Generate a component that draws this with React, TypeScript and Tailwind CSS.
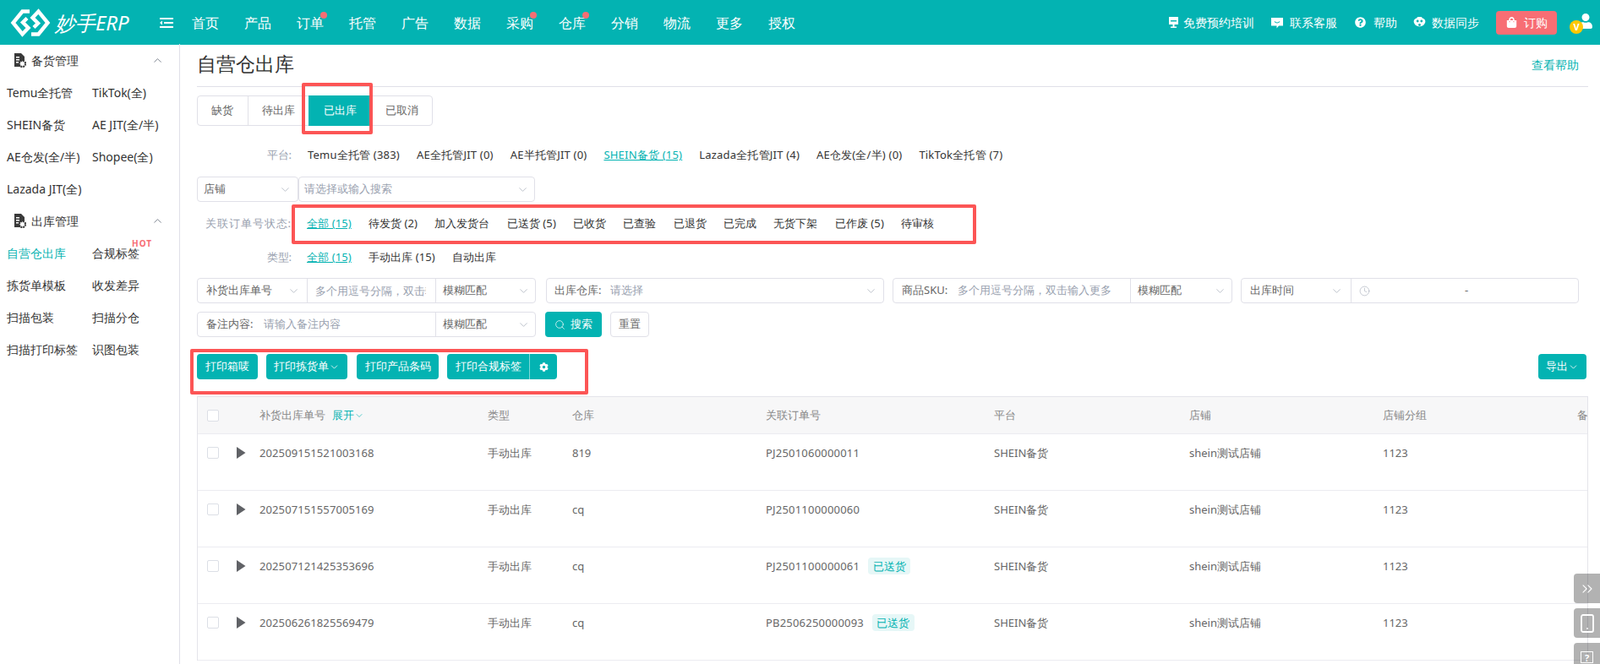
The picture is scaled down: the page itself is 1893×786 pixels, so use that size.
import { ChevronDown, ChevronUp, ChevronsRight, Clock, Search, Smartphone } from 'lucide-react';
import { FaCog, FaQuestionCircle, FaShoppingBag, FaUser } from 'react-icons/fa';

const navItems = [
  { label: '首页' },
  { label: '产品' },
  { label: '订单', dot: true },
  { label: '托管' },
  { label: '广告' },
  { label: '数据' },
  { label: '采购', dot: true },
  { label: '仓库', dot: true },
  { label: '分销' },
  { label: '物流' },
  { label: '更多' },
  { label: '授权' },
];

const platforms = ['Temu全托管 (383)', 'AE全托管JIT (0)', 'AE半托管JIT (0)', 'SHEIN备货 (15)', 'Lazada全托管JIT (4)', 'AE仓发(全/半) (0)', 'TikTok全托管 (7)'];
const statuses = ['全部 (15)', '待发货 (2)', '加入发货台', '已送货 (5)', '已收货', '已查验', '已退货', '已完成', '无货下架', '已作废 (5)', '待审核'];

const rows = [
  { no: '202509151521003168', wh: '819', order: 'PJ2501060000011', tag: false },
  { no: '202507151557005169', wh: 'cq', order: 'PJ2501100000060', tag: false },
  { no: '202507121425353696', wh: 'cq', order: 'PJ2501100000061', tag: true },
  { no: '202506261825569479', wh: 'cq', order: 'PB2506250000093', tag: true },
];

const cols = 'grid grid-cols-[73px_270px_100px_229px_270px_231px_229px_230px_200px]';

function DocIcon() {
  return (
    <svg width="15" height="17" viewBox="0 0 15 17" className="shrink-0">
      <path d="M1 0h8l4 4v5H9v7H1z" fill="#3a3a3a" />
      <path d="M3 4h4v1.500H3zM3 7h4v1.500H3zM3 10h3v1.500H3z" fill="#fff" />
      <circle cx="10.500" cy="12.500" r="3.600" fill="#fff" stroke="#3a3a3a" strokeWidth="2.200" strokeDasharray="2 0.8" />
    </svg>
  );
}

function Logo() {
  return (
    <svg width="48" height="36" viewBox="0 0 48 36" fill="none" stroke="#fff" strokeWidth="4.400" className="shrink-0">
      <path d="M23 4.500H14.500L3.500 18l11 13.500 7-7.500-6.500-6.500 5-5" />
      <path d="M25 31.500h8.500L44.500 18l-11-13.500-7 7.500 6.500 6.500-5 5" />
    </svg>
  );
}

function MenuFold() {
  return (
    <svg width="16" height="12" viewBox="0 0 16 12" fill="#fff" className="shrink-0">
      <rect x="0" y="0" width="16" height="2" />
      <rect x="5" y="5" width="11" height="2" />
      <rect x="0" y="10" width="16" height="2" />
      <path d="M0 6l3-2.500v5z" />
    </svg>
  );
}

function BoardIcon() {
  return (
    <svg width="13" height="15" viewBox="0 0 13 15" fill="#fff" className="shrink-0">
      <path d="M1 1h11v9H1z" />
      <rect x="3" y="5" width="7" height="1.500" fill="#03b3b2" />
      <path d="M5.500 10h2v2.500H10V14H3v-1.500h2.500z" />
    </svg>
  );
}

function ChatIcon() {
  return (
    <svg width="14" height="14" viewBox="0 0 14 14" fill="#fff" className="shrink-0">
      <path d="M0 1h14v9.500H9L6.500 13.500V10.500H0z" />
      <path d="M4 5.500c1.500 2 4.500 2 6 0" stroke="#03b3b2" strokeWidth="1.200" fill="none" />
    </svg>
  );
}

function SyncIcon() {
  return (
    <svg width="15" height="14" viewBox="0 0 15 14" className="shrink-0">
      <path d="M4 1.500a4 4 0 0 1 7 0 4 4 0 0 1 3 5.500 7 7 0 0 1-13 0 4 4 0 0 1 3-5.500z" fill="#fff" />
      <circle cx="5.200" cy="5" r="1.400" fill="#03b3b2" />
      <circle cx="9.800" cy="5" r="1.400" fill="#03b3b2" />
      <circle cx="7.500" cy="9.500" r="1.400" fill="#03b3b2" />
    </svg>
  );
}

function Caret({ className = '' }: { className?: string }) {
  return <ChevronDown size={15} strokeWidth={1} className={`shrink-0 text-gray-400 ${className}`} />;
}

function Fuzzy() {
  return (
    <div className="flex flex-1 items-center justify-between pl-[8px] pr-[6px] text-[#666]">
      模糊匹配
      <Caret />
    </div>
  );
}

function SideSection({ title, items }: { title: string; items: { label: string; active?: boolean; hot?: boolean }[] }) {
  return (
    <>
      <div className="flex h-[38px] items-center pl-[16px] pr-[18px] text-[14px] text-[#333]">
        <DocIcon />
        <span className="ml-[6px] flex-1">{title}</span>
        <ChevronUp size={15} strokeWidth={1} className="text-gray-700" />
      </div>
      <div className="grid grid-cols-[101px_1fr] pl-[8px] text-[14px] text-[#333]">
        {items.map((it) => (
          <div key={it.label} className="flex h-[38px] items-center">
            <span className={`relative whitespace-nowrap ${it.active ? 'text-[#03b3b2]' : ''}`}>
              {it.label}
              {it.hot && (
                <span className="absolute left-[47px] top-[-6px] text-[10px] font-bold leading-[10px] tracking-[1px] text-[#f76e74]">HOT</span>
              )}
            </span>
          </div>
        ))}
      </div>
    </>
  );
}

export default function App() {
  return (
    <div className="relative flex h-[786px] w-full flex-col overflow-hidden bg-white font-['Open_Sans','Noto_Sans_CJK_SC',sans-serif] text-[13px] text-[#333]">
      {/* top bar */}
      <header className="flex h-[53px] shrink-0 items-center bg-[#03b3b2] text-white">
        <div className="ml-[12px]">
          <Logo />
        </div>
        <span className="ml-[5px] w-[124px] text-[24px] italic leading-none">妙手ERP</span>
        <MenuFold />
        <nav className="ml-[22px] flex gap-[30px] text-[16px] font-medium">
          {navItems.map((n) => (
            <span key={n.label} className="relative whitespace-nowrap">
              {n.label}
              {n.dot && <span className="absolute right-[-4px] top-[-1px] h-[8px] w-[8px] rounded-full bg-[#f76e74]" />}
            </span>
          ))}
        </nav>
        <div className="ml-auto flex items-center pr-[9px] text-[14px]">
          <BoardIcon />
          <span className="ml-[5px]">免费预约培训</span>
          <span className="ml-[20px]"><ChatIcon /></span>
          <span className="ml-[8px]">联系客服</span>
          <FaQuestionCircle size={13} className="ml-[21px]" />
          <span className="ml-[9px]">帮助</span>
          <span className="ml-[19px]"><SyncIcon /></span>
          <span className="ml-[7px]">数据同步</span>
          <div className="ml-[20px] flex h-[28px] w-[72px] items-center justify-center gap-[8px] rounded-[4px] bg-[#f76e74]">
            <FaShoppingBag size={13} />
            订购
          </div>
          <div className="relative ml-[25px] h-[28px] w-[17px]">
            <FaUser size={18} className="absolute left-0 top-[3px]" />
            <span className="absolute left-[-10px] top-[11px] flex h-[16px] w-[16px] items-center justify-center rounded-full bg-[#ffc800] text-[11px] font-bold leading-none">V</span>
          </div>
        </div>
      </header>

      <div className="flex min-h-0 flex-1">
        {/* left menu */}
        <aside className="-mt-px w-[213px] shrink-0 border-r border-[#e0e0e8]">
          <SideSection
            title="备货管理"
            items={[
              { label: 'Temu全托管' },
              { label: 'TikTok(全)' },
              { label: 'SHEIN备货' },
              { label: 'AE JIT(全/半)' },
              { label: 'AE仓发(全/半)' },
              { label: 'Shopee(全)' },
              { label: 'Lazada JIT(全)' },
            ]}
          />
          <SideSection
            title="出库管理"
            items={[
              { label: '自营仓出库', active: true },
              { label: '合规标签', hot: true },
              { label: '拣货单模板' },
              { label: '收发差异' },
              { label: '扫描包装' },
              { label: '扫描分仓' },
              { label: '扫描打印标签' },
              { label: '识图包装' },
            ]}
          />
        </aside>

        <main className="min-w-0 flex-1 pl-[20px] pr-[14px]">
          <div className="flex h-[50px] items-center justify-between border-b border-[#e0e0e8] pb-[3px] pr-[11px]">
            <h1 className="mb-[2px] text-[23px] leading-none text-[#333]">自营仓出库</h1>
            <a className="text-[14px] text-[#03b3b2]">查看帮助</a>
          </div>

          {/* tabs */}
          <div className="relative mt-[10px] flex h-[36px] w-[279px] rounded-[4px] border border-[#e0e0e8] text-[#666]">
            <div className="flex w-[60px] items-center justify-center border-r border-[#e0e0e8]">缺货</div>
            <div className="flex w-[72px] items-center justify-center">待出库</div>
            <div className="my-[-1px] flex w-[75px] items-center justify-center bg-[#03b3b2] text-white">已出库</div>
            <div className="flex w-[72px] items-center justify-center">已取消</div>
            <div className="absolute left-[123px] top-[-16px] h-[61px] w-[84px] rounded-[2px] border-4 border-[#fc5555]" />
          </div>

          <div className="mt-[22px] flex h-[26px] items-center">
            <span className="w-[112px] shrink-0 text-right text-gray-400">平台:</span>
            <div className="ml-[19px] flex gap-[20px] whitespace-nowrap tracking-[0.2px]">
              {platforms.map((p, i) => (
                <span key={p} className={i === 3 ? 'text-[#03b3b2] underline' : ''}>{p}</span>
              ))}
            </div>
          </div>

          <div className="mt-[12px] flex h-[30px]">
            <div className="flex w-[120px] items-center justify-between rounded-[4px] border border-[#e0e0e8] pl-[7px] pr-[7px] text-[#666]">
              店铺
              <Caret />
            </div>
            <div className="flex w-[280px] items-center justify-between rounded-[4px] border border-[#e0e0e8] pl-[6px] pr-[6px] text-gray-400">
              请选择或输入搜索
              <Caret />
            </div>
          </div>

          <div className="relative mt-[12px] flex h-[26px] items-center pt-[2px]">
            <span className="w-[112px] shrink-0 text-right tracking-[1px] text-gray-400">关联订单号状态:</span>
            <div className="ml-[18px] flex gap-[20px] whitespace-nowrap tracking-[0.1px]">
              {statuses.map((s, i) => (
                <span key={s} className={i === 0 ? 'text-[#03b3b2] underline' : ''}>{s}</span>
              ))}
            </div>
            <div className="absolute left-[112px] top-[-9px] h-[47px] w-[810px] rounded-[2px] border-4 border-[#fc5555]" />
          </div>

          <div className="mt-[14px] flex h-[26px] items-center pt-[2px]">
            <span className="w-[112px] shrink-0 text-right text-gray-400">类型:</span>
            <div className="ml-[18px] flex gap-[20px] whitespace-nowrap tracking-[0.1px]">
              <span className="text-[#03b3b2] underline">全部 (15)</span>
              <span>手动出库 (15)</span>
              <span>自动出库</span>
            </div>
          </div>

          {/* filters */}
          <div className="mt-[12px] flex h-[30px]">
            <div className="flex w-[401px] rounded-[4px] border border-[#e0e0e8]">
              <div className="flex w-[130px] items-center justify-between border-r border-[#e0e0e8] pl-[10px] pr-[8px] text-[#666]">
                补货出库单号
                <Caret />
              </div>
              <div className="w-[152px] overflow-hidden whitespace-nowrap border-r border-[#e0e0e8] pl-[9px] leading-[28px] text-gray-400">
                <div className="w-[131px] overflow-hidden">多个用逗号分隔，双击输入更多</div>
              </div>
              <Fuzzy />
            </div>
            <div className="ml-[12px] flex w-[400px] items-center rounded-[4px] border border-[#e0e0e8] pl-[9px] pr-[7px]">
              <span className="text-[#666]">出库仓库:</span>
              <span className="ml-[11px] flex-1 text-gray-400">请选择</span>
              <Caret />
            </div>
            <div className="ml-[10px] flex w-[402px] rounded-[4px] border border-[#e0e0e8]">
              <div className="flex w-[281px] items-center border-r border-[#e0e0e8] pl-[10px]">
                <span className="text-[#666]">商品SKU:</span>
                <span className="ml-[12px] whitespace-nowrap text-gray-400">多个用逗号分隔，双击输入更多</span>
              </div>
              <Fuzzy />
            </div>
            <div className="ml-[10px] flex w-[400px] rounded-[4px] border border-[#e0e0e8]">
              <div className="flex w-[130px] items-center justify-between border-r border-[#e0e0e8] pl-[10px] pr-[9px] text-[#666]">
                出库时间
                <Caret />
              </div>
              <div className="flex flex-1 items-center pl-[9px] text-[#666]">
                <Clock size={13} strokeWidth={1} className="text-gray-400" />
                <span className="ml-[112px]">-</span>
              </div>
            </div>
          </div>

          <div className="mt-[10px] flex h-[30px]">
            <div className="flex w-[401px] rounded-[4px] border border-[#e0e0e8]">
              <div className="flex w-[282px] items-center border-r border-[#e0e0e8] pl-[10px]">
                <span className="text-[#666]">备注内容:</span>
                <span className="ml-[13px] text-gray-400">请输入备注内容</span>
              </div>
              <Fuzzy />
            </div>
            <button className="ml-[11px] flex w-[67px] items-center justify-center gap-[6px] rounded-[4px] bg-[#03b3b2] text-white">
              <Search size={13} strokeWidth={1.300} />
              搜索
            </button>
            <button className="ml-[10px] w-[46px] rounded-[4px] border border-[#e0e0e8] text-[#666]">重置</button>
          </div>

          {/* actions */}
          <div className="relative mt-[20px] flex h-[30px] items-stretch text-white">
            <button className="w-[72px] rounded-[4px] bg-[#03b3b2]">打印箱唛</button>
            <button className="ml-[10px] flex w-[96px] items-center justify-center rounded-[4px] bg-[#03b3b2]">
              打印拣货单
              <ChevronDown size={13} strokeWidth={1.500} />
            </button>
            <button className="ml-[11px] w-[97px] rounded-[4px] bg-[#03b3b2]">打印产品条码</button>
            <div className="ml-[10px] flex rounded-[4px] bg-[#03b3b2]">
              <button className="w-[98px] border-r border-[#7fd9d8]">打印合规标签</button>
              <button className="flex w-[32px] items-center justify-center"><FaCog size={11} /></button>
            </div>
            <button className="ml-auto mr-[2px] flex w-[57px] items-center justify-center rounded-[4px] bg-[#03b3b2]">
              导出
              <ChevronDown size={13} strokeWidth={1.500} />
            </button>
            <div className="absolute left-[-8px] top-[-6px] h-[54px] w-[471px] rounded-[2px] border-4 border-[#fc5555]" />
          </div>

          {/* table */}
          <div className="mt-[20px] overflow-hidden border-x border-t border-[#e4e4ea] text-[#666]">
            <div className={`${cols} h-[44px] items-center border-b border-[#ececf1] bg-[#f7f7f8] font-medium text-[#888]`}>
              <div className="pl-[11px]">
                <div className="h-[14px] w-[14px] rounded-[2px] border border-[#dcdfe6] bg-white" />
              </div>
              <div className="whitespace-nowrap">
                补货出库单号
                <span className="ml-[8px] font-normal text-[#03b3b2]">
                  展开
                  <ChevronDown size={12} strokeWidth={1.300} className="inline" />
                </span>
              </div>
              <div>类型</div>
              <div>仓库</div>
              <div>关联订单号</div>
              <div>平台</div>
              <div>店铺</div>
              <div>店铺分组</div>
              <div className="whitespace-nowrap">备注</div>
            </div>
            {rows.map((r) => (
              <div key={r.no} className={`${cols} h-[67px] border-b border-[#ececf1] pt-[12px] leading-[20px]`}>
                <div className="flex h-[20px] items-center pl-[11px]">
                  <div className="h-[14px] w-[14px] rounded-[2px] border border-[#dcdfe6]" />
                  <svg width="11" height="14" viewBox="0 0 11 14" fill="#606266" className="ml-[21px] shrink-0">
                    <path d="M0 0l10.500 7L0 14z" />
                  </svg>
                </div>
                <div className="tracking-[0.1px]">{r.no}</div>
                <div>手动出库</div>
                <div>{r.wh}</div>
                <div className="flex h-[20px] items-center">
                  <span className="tracking-[0.2px]">{r.order}</span>
                  {r.tag && <span className="ml-[10px] h-[20px] w-[50px] rounded-[4px] bg-[#e6f7f7] text-center text-[#03b3b2]">已送货</span>}
                </div>
                <div>SHEIN备货</div>
                <div>shein测试店铺</div>
                <div>1123</div>
                <div />
              </div>
            ))}
          </div>
        </main>
      </div>

      {/* floating side buttons */}
      <div className="absolute right-0 top-[679px] flex w-[31px] flex-col gap-[6px] text-white">
        <div className="flex h-[35px] items-center justify-center rounded-l-[4px] bg-black/30">
          <ChevronsRight size={20} strokeWidth={1.300} />
        </div>
        <div className="flex h-[35px] items-center justify-center rounded-l-[4px] bg-black/30">
          <Smartphone size={24} strokeWidth={1.800} />
        </div>
        <div className="flex h-[35px] justify-center rounded-l-[4px] bg-black/30 pt-[10px]">
          <div className="h-[14px] w-[15px] border border-white text-center text-[11px] font-bold leading-[13px]">?</div>
        </div>
      </div>
    </div>
  );
}
